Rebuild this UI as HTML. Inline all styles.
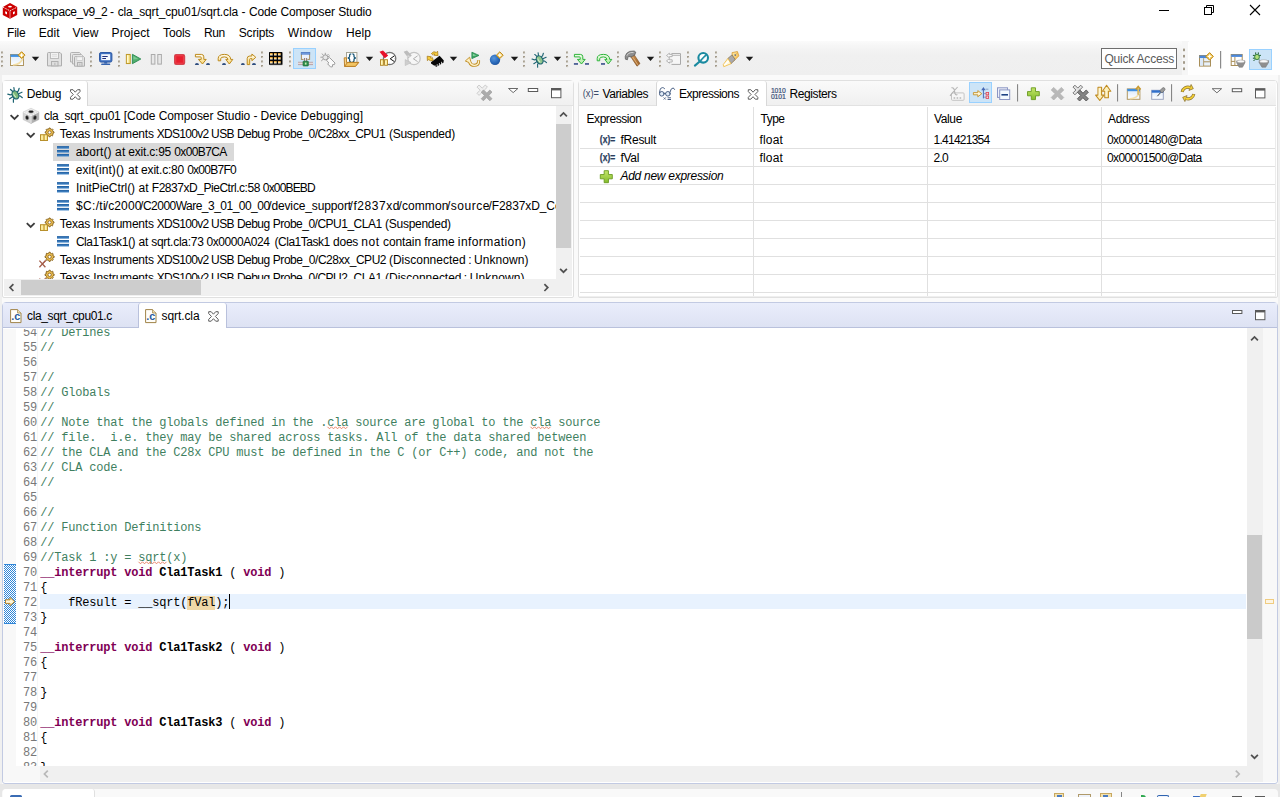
<!DOCTYPE html>
<html><head><meta charset="utf-8"><title>CCS</title>
<style>
*{box-sizing:border-box;margin:0;padding:0}
html,body{width:1280px;height:797px;overflow:hidden;background:#f0f0f0}
body{font-family:"Liberation Sans",sans-serif;font-size:12px;color:#000;position:relative}
.abs{position:absolute}
.t{position:absolute;white-space:pre;line-height:14px;font-size:12px;color:#000}
.i{font-style:italic}
#titlebar{left:0;top:0;width:1280px;height:22px;background:#fff}
#menubar{left:0;top:22px;width:1280px;height:19px;background:#fff}
#toolbar{left:0;top:41px;width:1280px;height:34px;background:linear-gradient(#fbfbfb 0,#f6f6f6 14%,#f2f2f2 30%,#f0f0f0 45%,#efefef 100%)}
#subbar{left:0;top:75px;width:1280px;height:722px;background:#fafafa}
.panel{position:absolute;background:#fff;border:1px solid #e0e0e0;border-radius:4px 4px 2px 2px;overflow:hidden}
.mono{font-family:"Liberation Mono",monospace}
svg{position:absolute;overflow:visible}
.hl{position:absolute;background:#e0e0e0;height:1px}
.vl{position:absolute;background:#e0e0e0;width:1px}

.ln{position:absolute;left:13px;width:21px;text-align:right;font-family:"Liberation Mono",monospace;font-size:12px;line-height:15px;letter-spacing:-0.2px;color:#787878;white-space:pre}
.cl{position:absolute;left:37.2px;font-family:"Liberation Mono",monospace;font-size:12px;line-height:15px;letter-spacing:-0.2px;color:#000;white-space:pre}
.c,.cu{color:#3f7f5f}
.k{color:#7f0055;font-weight:bold}
.b{font-weight:bold}
.o{background:#f0d8a8}
</style></head><body>
<div id="titlebar" class="abs"></div>
<div id="menubar" class="abs"></div>
<div id="toolbar" class="abs"></div>
<div id="subbar" class="abs"></div>

<!-- TITLE -->
<div class="t" style="left: 22.7px; top: 5px; letter-spacing: -0.383px;">workspace_v9_2</div>
<div class="t" style="left:110.1px;top:5px">-</div>
<div class="t" style="left: 117.7px; top: 5px; letter-spacing: -0.135px;">cla_sqrt_cpu01/sqrt.cla</div>
<div class="t" style="left:241.6px;top:5px">-</div>
<div class="t" style="left: 248.9px; top: 5px; letter-spacing: -0.102px;">Code Composer Studio</div>

<!-- MENU -->
<div class="t m" style="left: 7px; top: 25.5px; letter-spacing: -0.186px;">File</div>
<div class="t m" style="left: 38.8px; top: 25.5px; letter-spacing: 0.003px;">Edit</div>
<div class="t m" style="left: 72.6px; top: 25.5px; letter-spacing: 0.001px;">View</div>
<div class="t m" style="left: 111.5px; top: 25.5px; letter-spacing: 0.134px;">Project</div>
<div class="t m" style="left: 163px; top: 25.5px; letter-spacing: -0.103px;">Tools</div>
<div class="t m" style="left: 204.1px; top: 25.5px; letter-spacing: -0.439px;">Run</div>
<div class="t m" style="left: 238.8px; top: 25.5px; letter-spacing: -0.184px;">Scripts</div>
<div class="t m" style="left: 287.8px; top: 25.5px; letter-spacing: 0.302px;">Window</div>
<div class="t m" style="left: 345.9px; top: 25.5px; letter-spacing: 0.078px;">Help</div>

<div class="abs" id="lmargin" style="left:0;top:75px;width:2px;height:709px;background:#f0f0f0"></div>
<div class="abs" id="rmargin" style="left:1278px;top:75px;width:2px;height:709px;background:#f0f0f0"></div>
<!-- PANELS -->
<div class="panel" id="pDebug" style="left:2px;top:80px;width:572px;height:218px"></div>
<div class="panel" id="pExpr" style="left:578px;top:80px;width:700px;height:218px"></div>
<div class="panel" id="pEdit" style="left:2px;top:302px;width:1276px;height:482px;border-color:#c2cae2;border-radius:4px 4px 3px 3px"></div>

<!--DEBUG-->
<div class="abs" style="left:3px;top:81px;width:570px;height:25px;background:linear-gradient(#fafafa,#f0f0f0);border-bottom:1px solid #e2e2e2"></div>
<div class="abs" id="dbgtab" style="left:3px;top:81px;width:85px;height:25px;background:#fff;border-right:1px solid #d8d8d8;border-radius:3px 3px 0 0"></div>
<div class="t" style="left: 26.8px; top: 87px; letter-spacing: -0.175px;">Debug</div>
<div class="abs" style="left:53px;top:143px;width:181px;height:18px;background:#d9d9d9"></div>
<div class="abs" id="treeclip" style="left:3px;top:107px;width:553px;height:172px;overflow:hidden">
<div class="t" style="left: 41px; top: 2px; letter-spacing: -0.364px;">cla_sqrt_cpu01</div>
<div class="t" style="left: 120.8px; top: 2px; letter-spacing: -0.081px;">[Code Composer Studio - Device</div>
<div class="t" style="left: 297.5px; top: 2px; letter-spacing: 0.131px;">Debugging]</div>
<div class="t" style="left: 56.8px; top: 20px; letter-spacing: -0.199px;">Texas Instruments</div>
<div class="t" style="left: 153.7px; top: 20px; letter-spacing: -0.697px;">XDS100v2</div>
<div class="t" style="left: 208px; top: 20px; letter-spacing: -0.531px;">USB Debug</div>
<div class="t" style="left: 269.8px; top: 20px; letter-spacing: -0.5px;">Probe_0/C28xx_CPU1</div>
<div class="t" style="left: 385.9px; top: 20px; letter-spacing: -0.238px;">(Suspended)</div>
<div class="t" style="left: 72.7px; top: 38px; letter-spacing: 0.079px;">abort()</div>
<div class="t" style="left: 112.1px; top: 38px; letter-spacing: 0.142px;">at</div>
<div class="t" style="left: 125.3px; top: 38px; letter-spacing: -0.211px;">exit.c:95</div>
<div class="t" style="left: 171.2px; top: 38px; letter-spacing: -0.597px;">0x00B7CA</div>
<div class="t" style="left: 72.7px; top: 56px; letter-spacing: 0.105px;">exit(int)()</div>
<div class="t" style="left: 124.9px; top: 56px; letter-spacing: 0.092px;">at</div>
<div class="t" style="left: 138.1px; top: 56px; letter-spacing: -0.189px;">exit.c:80</div>
<div class="t" style="left: 184.2px; top: 56px; letter-spacing: -0.75px;">0x00B7F0</div>
<div class="t" style="left: 73.1px; top: 74px; letter-spacing: -0.086px;">InitPieCtrl()</div>
<div class="t" style="left: 135.6px; top: 74px; letter-spacing: 0.092px;">at</div>
<div class="t" style="left: 148.8px; top: 74px; letter-spacing: -0.465px;">F2837xD_PieCtrl.c:58</div>
<div class="t" style="left: 259.8px; top: 74px; letter-spacing: -0.838px;">0x00BEBD</div>
<div class="t" style="left: 72.9px; top: 92px; letter-spacing: 0.364px;">$C:/ti</div>
<div class="t" style="left: 101.7px; top: 92px; letter-spacing: 0.128px;">/c2000</div>
<div class="t" style="left: 137.1px; top: 92px; letter-spacing: -0.516px;">/C2000Ware_3_01_00_00</div>
<div class="t" style="left: 265.2px; top: 92px; letter-spacing: -0.129px;">/device_support</div>
<div class="t" style="left: 346.6px; top: 92px; letter-spacing: 0.544px;">/f2837xd</div>
<div class="t" style="left: 395.6px; top: 92px; letter-spacing: 0.063px;">/common</div>
<div class="t" style="left: 444px; top: 92px; letter-spacing: 0.52px;">/source</div>
<div class="t" style="left: 485.6px; top: 92px; letter-spacing: -0.104px;">/F2837xD_Co</div>
<div class="t" style="left: 56.8px; top: 110px; letter-spacing: -0.199px;">Texas Instruments</div>
<div class="t" style="left: 153.7px; top: 110px; letter-spacing: -0.697px;">XDS100v2</div>
<div class="t" style="left: 208px; top: 110px; letter-spacing: -0.531px;">USB Debug</div>
<div class="t" style="left: 269.8px; top: 110px; letter-spacing: -0.506px;">Probe_0/CPU1_CLA1</div>
<div class="t" style="left: 382.1px; top: 110px; letter-spacing: -0.274px;">(Suspended)</div>
<div class="t" style="left: 72.9px; top: 128px; letter-spacing: -0.448px;">Cla1Task1()</div>
<div class="t" style="left: 135.4px; top: 128px; letter-spacing: 0.042px;">at</div>
<div class="t" style="left: 148.2px; top: 128px; letter-spacing: -0.269px;">sqrt.cla:73</div>
<div class="t" style="left: 203.5px; top: 128px; letter-spacing: -0.451px;">0x0000A024</div>
<div class="t" style="left: 271.5px; top: 128px; letter-spacing: -0.483px;">(Cla1Task1</div>
<div class="t" style="left: 330.1px; top: 128px; letter-spacing: -0.283px;">does</div>
<div class="t" style="left: 358.3px; top: 128px; letter-spacing: 0.504px;">not</div>
<div class="t" style="left: 380px; top: 128px; letter-spacing: -0.1px;">contain</div>
<div class="t" style="left: 421.3px; top: 128px; letter-spacing: -0.098px;">frame</div>
<div class="t" style="left: 454.8px; top: 128px; letter-spacing: 0.42px;">information)</div>
<div class="t" style="left: 56.8px; top: 146px; letter-spacing: -0.199px;">Texas Instruments</div>
<div class="t" style="left: 153.7px; top: 146px; letter-spacing: -0.697px;">XDS100v2</div>
<div class="t" style="left: 208px; top: 146px; letter-spacing: -0.531px;">USB Debug</div>
<div class="t" style="left: 269.8px; top: 146px; letter-spacing: -0.45px;">Probe_0/C28xx_CPU2</div>
<div class="t" style="left: 385.9px; top: 146px; letter-spacing: -0.001px;">(Disconnected</div>
<div class="t" style="left:465.2px;top:146px">:</div>
<div class="t" style="left: 471.1px; top: 146px; letter-spacing: 0.046px;">Unknown)</div>
<div class="t" style="left: 56.8px; top: 164px; letter-spacing: -0.199px;">Texas Instruments</div>
<div class="t" style="left: 153.7px; top: 164px; letter-spacing: -0.697px;">XDS100v2</div>
<div class="t" style="left: 208px; top: 164px; letter-spacing: -0.531px;">USB Debug</div>
<div class="t" style="left: 269.8px; top: 164px; letter-spacing: -0.506px;">Probe_0/CPU2_CLA1</div>
<div class="t" style="left: 382.1px; top: 164px; letter-spacing: -0.025px;">(Disconnected</div>
<div class="t" style="left:460.8px;top:164px">:</div>
<div class="t" style="left: 466.7px; top: 164px; letter-spacing: 0.121px;">Unknown)</div>
</div>
<div class="abs" style="left:556px;top:106px;width:16px;height:173px;background:#f0f0f0"></div>
<div class="abs" style="left:556px;top:124px;width:15px;height:124px;background:#cdcdcd"></div>
<div class="abs" style="left:4px;top:279px;width:568px;height:17px;background:#f0f0f0"></div>
<div class="abs" style="left:21px;top:280px;width:180px;height:15px;background:#cdcdcd"></div>
<!--/DEBUG-->
<!--EXPR-->
<div class="abs" style="left:579px;top:81px;width:697px;height:25px;background:linear-gradient(#fafafa,#f0f0f0);border-bottom:1px solid #e2e2e2"></div>
<div class="abs" id="exprtab" style="left:656px;top:81px;width:111px;height:25px;background:#fff;border-left:1px solid #d8d8d8;border-right:1px solid #d8d8d8;border-radius:3px 3px 0 0"></div>
<div class="t" style="left: 602.5px; top: 87px; letter-spacing: -0.405px;">Variables</div>
<div class="t" style="left: 679px; top: 87px; letter-spacing: -0.489px;">Expressions</div>
<div class="t" style="left: 789.5px; top: 87px; letter-spacing: -0.41px;">Registers</div>
<!-- grid -->
<div class="vl" style="left:753px;top:107px;height:189px"></div>
<div class="vl" style="left:927px;top:107px;height:189px"></div>
<div class="vl" style="left:1101px;top:107px;height:189px"></div>
<div class="hl" style="left:580px;top:148px;width:696px"></div>
<div class="hl" style="left:580px;top:166px;width:696px"></div>
<div class="hl" style="left:580px;top:184px;width:696px"></div>
<div class="hl" style="left:580px;top:202px;width:696px"></div>
<div class="hl" style="left:580px;top:220px;width:696px"></div>
<div class="hl" style="left:580px;top:238px;width:696px"></div>
<div class="hl" style="left:580px;top:256px;width:696px"></div>
<div class="hl" style="left:580px;top:274px;width:696px"></div>
<div class="hl" style="left:580px;top:292px;width:696px"></div>
<div class="vl" style="left:1275px;top:107px;height:189px;background:#ececec"></div>
<div class="hl" style="left:579px;top:296px;width:697px;background:#efefef"></div>
<div class="t" style="left: 586.5px; top: 112px; letter-spacing: -0.437px;">Expression</div>
<div class="t" style="left: 760.5px; top: 112px; letter-spacing: -0.504px;">Type</div>
<div class="t" style="left: 934px; top: 112px; letter-spacing: -0.362px;">Value</div>
<div class="t" style="left: 1108px; top: 112px; letter-spacing: -0.362px;">Address</div>
<div class="t" style="left: 620.5px; top: 133px; letter-spacing: -0.266px;">fResult</div>
<div class="t" style="left: 759.5px; top: 133px; letter-spacing: 0.163px;">float</div>
<div class="t" style="left: 933.5px; top: 133px; letter-spacing: -0.741px;">1.41421354</div>
<div class="t" style="left: 1107px; top: 133px; letter-spacing: -0.606px;">0x00001480@Data</div>
<div class="t" style="left: 620.5px; top: 151px; letter-spacing: -0.324px;">fVal</div>
<div class="t" style="left: 759.5px; top: 151px; letter-spacing: 0.163px;">float</div>
<div class="t" style="left: 933.5px; top: 151px; letter-spacing: -0.729px;">2.0</div>
<div class="t" style="left: 1107px; top: 151px; letter-spacing: -0.606px;">0x00001500@Data</div>
<div class="t i" style="left: 620.5px; top: 169px; letter-spacing: -0.282px;">Add new expression</div>
<!--/EXPR-->
<!--EDITOR-->
<div class="abs" style="left:3px;top:303px;width:1274px;height:25px;background:linear-gradient(#e9edfb,#dde2f3);border-bottom:1px solid #b9c1dc"></div>
<div class="abs" id="edtab" style="left:138px;top:303px;width:89px;height:25px;background:#fff;border-left:1px solid #b9c1dc;border-right:1px solid #b9c1dc;border-radius:3px 3px 0 0"></div>
<div class="t" style="left: 27px; top: 309px; letter-spacing: -0.358px;">cla_sqrt_cpu01.c</div>
<div class="t" style="left: 161.5px; top: 309px; letter-spacing: -0.086px;">sqrt.cla</div>
<div class="abs" id="edclip" style="left:3px;top:328px;width:1243px;height:438px;overflow:hidden;background:#fff;clip-path:inset(1px 0 0 0)">
<div class="abs" style="left:0;top:0;width:13px;height:438px;background:#f8f8f8"></div><div class="abs" style="left:34px;top:0;width:1px;height:438px;background:#f6f6f6"></div>
<div class="abs" style="left:37px;top:266px;width:1206px;height:15px;background:#e8f2fe"></div>
<div class="abs" id="hatch" style="left:1px;top:236px;width:12px;height:60px;background-color:#fff;background-image:linear-gradient(45deg,#2f86d8 25%,transparent 25%,transparent 75%,#2f86d8 75%),linear-gradient(45deg,#2f86d8 25%,transparent 25%,transparent 75%,#2f86d8 75%);background-size:2px 2px;background-position:0 0,1px 1px;border-top:1px solid #2f86d8;border-bottom:1px solid #2f86d8"></div>
<div class="ln" style="top:-2px">54</div>
<div class="cl" style="top:-2px"><span class="c">// Defines</span></div>
<div class="ln" style="top:13px">55</div>
<div class="cl" style="top:13px"><span class="c">//</span></div>
<div class="ln" style="top:28px">56</div>
<div class="ln" style="top:43px">57</div>
<div class="cl" style="top:43px"><span class="c">//</span></div>
<div class="ln" style="top:58px">58</div>
<div class="cl" style="top:58px"><span class="c">// Globals</span></div>
<div class="ln" style="top:73px">59</div>
<div class="cl" style="top:73px"><span class="c">//</span></div>
<div class="ln" style="top:88px">60</div>
<div class="cl" style="top:88px"><span class="c">// Note that the globals defined in the .</span><span class="cu">cla</span><span class="c"> source are global to the </span><span class="cu">cla</span><span class="c"> source</span></div>
<div class="ln" style="top:103px">61</div>
<div class="cl" style="top:103px"><span class="c">// file.  i.e. they may be shared across tasks. All of the data shared between</span></div>
<div class="ln" style="top:118px">62</div>
<div class="cl" style="top:118px"><span class="c">// the CLA and the C28x CPU must be defined in the C (or C++) code, and not the</span></div>
<div class="ln" style="top:133px">63</div>
<div class="cl" style="top:133px"><span class="c">// CLA code.</span></div>
<div class="ln" style="top:148px">64</div>
<div class="cl" style="top:148px"><span class="c">//</span></div>
<div class="ln" style="top:163px">65</div>
<div class="ln" style="top:178px">66</div>
<div class="cl" style="top:178px"><span class="c">//</span></div>
<div class="ln" style="top:193px">67</div>
<div class="cl" style="top:193px"><span class="c">// Function Definitions</span></div>
<div class="ln" style="top:208px">68</div>
<div class="cl" style="top:208px"><span class="c">//</span></div>
<div class="ln" style="top:223px">69</div>
<div class="cl" style="top:223px"><span class="c">//Task 1 :y = </span><span class="cu">sqrt</span><span class="c">(x)</span></div>
<div class="ln" style="top:238px">70</div>
<div class="cl" style="top:238px"><span class="k">__interrupt</span><span class="n"> </span><span class="k">void</span><span class="n"> </span><span class="b">Cla1Task1</span><span class="n"> ( </span><span class="k">void</span><span class="n"> )</span></div>
<div class="ln" style="top:253px">71</div>
<div class="cl" style="top:253px"><span class="n">{</span></div>
<div class="ln" style="top:268px">72</div>
<div class="cl" style="top:268px"><span class="n">    fResult = __sqrt(</span><span class="o">fVal</span><span class="n">);</span></div>
<div class="ln" style="top:283px">73</div>
<div class="cl" style="top:283px"><span class="n">}</span></div>
<div class="ln" style="top:298px">74</div>
<div class="ln" style="top:313px">75</div>
<div class="cl" style="top:313px"><span class="k">__interrupt</span><span class="n"> </span><span class="k">void</span><span class="n"> </span><span class="b">Cla1Task2</span><span class="n"> ( </span><span class="k">void</span><span class="n"> )</span></div>
<div class="ln" style="top:328px">76</div>
<div class="cl" style="top:328px"><span class="n">{</span></div>
<div class="ln" style="top:343px">77</div>
<div class="ln" style="top:358px">78</div>
<div class="cl" style="top:358px"><span class="n">}</span></div>
<div class="ln" style="top:373px">79</div>
<div class="ln" style="top:388px">80</div>
<div class="cl" style="top:388px"><span class="k">__interrupt</span><span class="n"> </span><span class="k">void</span><span class="n"> </span><span class="b">Cla1Task3</span><span class="n"> ( </span><span class="k">void</span><span class="n"> )</span></div>
<div class="ln" style="top:403px">81</div>
<div class="cl" style="top:403px"><span class="n">{</span></div>
<div class="ln" style="top:418px">82</div>
<div class="ln" style="top:433px">83</div>
<div class="cl" style="top:433px"><span class="n">}</span></div>
<div class="abs" style="left:226px;top:266px;width:1.4px;height:15px;background:#000"></div>
</div>
<div class="abs" style="left:1247px;top:328px;width:16px;height:438px;background:#f0f0f0"></div>
<div class="abs" style="left:1247px;top:535px;width:15px;height:104px;background:#cacaca"></div>
<div class="abs" style="left:1263px;top:328px;width:14px;height:454px;background:#f8f8f8"></div>
<div class="abs" style="left:1265px;top:599px;width:9px;height:5px;border:1px solid #f0cc80;background:#fdf5e4"></div>
<div class="abs" style="left:3px;top:766px;width:1260px;height:16px;background:#f0f0f0"></div>
<div class="abs" style="left:3px;top:766px;width:37px;height:16px;background:#f8f8f8"></div>
<!--/EDITOR-->
<!--TOOLBAR-->
<svg id="tbsvg" style="left:0;top:0" width="1280" height="80" viewBox="0 0 1280 80">
<defs><linearGradient id="gy" x1="0" y1="0" x2="0" y2="1"><stop offset="0" stop-color="#f8a428"></stop><stop offset="0.55" stop-color="#ffd98c"></stop><stop offset="1" stop-color="#fffaf0"></stop></linearGradient><radialGradient id="gball" cx="0.4" cy="0.35" r="0.7"><stop offset="0" stop-color="#5896dc"></stop><stop offset="0.6" stop-color="#2c6cbc"></stop><stop offset="1" stop-color="#1a509c"></stop></radialGradient><linearGradient id="gwin" x1="0" y1="0" x2="0" y2="1"><stop offset="0" stop-color="#d8e8fa"></stop><stop offset="1" stop-color="#ffffff"></stop></linearGradient><linearGradient id="gham" x1="0" y1="0" x2="1" y2="1"><stop offset="0" stop-color="#d09a5c"></stop><stop offset="1" stop-color="#9a5e24"></stop></linearGradient><linearGradient id="gstep" x1="0" y1="0" x2="0" y2="1"><stop offset="0" stop-color="#fffdf4"></stop><stop offset="1" stop-color="#f9d670"></stop></linearGradient><linearGradient id="gstepg" x1="0" y1="0" x2="0" y2="1"><stop offset="0" stop-color="#f2fdec"></stop><stop offset="1" stop-color="#a8e89a"></stop></linearGradient><linearGradient id="gpen" x1="0" y1="0" x2="1" y2="1"><stop offset="0" stop-color="#fdeeb0"></stop><stop offset="1" stop-color="#f2b040"></stop></linearGradient></defs>
<g transform="translate(1,51.5)"><rect x="0" y="0.0" width="2" height="2" fill="#a39b8b"></rect><rect x="0.6" y="1.2" width="1.6" height="1" fill="#d8d4cc"></rect><rect x="0" y="4.5" width="2" height="2" fill="#a39b8b"></rect><rect x="0.6" y="5.7" width="1.6" height="1" fill="#d8d4cc"></rect><rect x="0" y="9.0" width="2" height="2" fill="#a39b8b"></rect><rect x="0.6" y="10.2" width="1.6" height="1" fill="#d8d4cc"></rect><rect x="0" y="13.5" width="2" height="2" fill="#a39b8b"></rect><rect x="0.6" y="14.7" width="1.6" height="1" fill="#d8d4cc"></rect></g>
<g transform="translate(10,52)"><rect x="0.5" y="2.5" width="13" height="11" fill="url(#gwin)" stroke="#b09660"></rect><rect x="0.5" y="2.5" width="13" height="2.4" fill="#3f8fe0"></rect><path d="M3 13Q11 12.5 12.8 6" fill="none" stroke="#f3dfa8" stroke-width="1.6"></path><path d="M11.6 -0.3L15 3.1L11.6 6.5L8.2 3.1Z" fill="#f0c448" stroke="#c08c20" stroke-width="1"></path><path d="M11.6 1.2V5M9.7 3.1H13.5" stroke="#ffffff" stroke-width="1.2"></path></g>
<g transform="translate(31.8,56.8)"><path d="M0 0H7.4L3.7 4.3Z" fill="#1a1a1a"></path></g>
<g transform="translate(47,52)"><path d="M1.5 0.5H13L14.5 2V13.9H0.5V1.5Q0.5 0.5 1.5 0.5Z" fill="#e2e2e2" stroke="#adadad"></path><rect x="3.5" y="0.5" width="8" height="6" fill="#f2f2f2" stroke="#bcbcbc"></rect><path d="M5 2.5H10M5 4.2H10" stroke="#d8d8d8" stroke-width="0.8"></path><rect x="4.5" y="9.5" width="6.5" height="4.4" fill="#dedede" stroke="#b0b0b0"></rect><rect x="7" y="10.8" width="1.6" height="2.6" fill="#c4c4c4"></rect></g>
<g transform="translate(70,52)"><path d="M1.5 0.5H9.5L10.5 1.5V10H0.5V1.5Q0.5 0.5 1.5 0.5Z" fill="#e6e6e6" stroke="#b2b2b2"></path><path d="M3.5 2.5H11.5L12.5 3.5V12H2.5V3.5Q2.5 2.5 3.5 2.5Z" fill="#e6e6e6" stroke="#b2b2b2"></path><path d="M5.5 4.5H13.5L14.5 5.5V14.2H4.5V5.5Q4.5 4.5 5.5 4.5Z" fill="#e2e2e2" stroke="#adadad"></path><rect x="6.8" y="4.8" width="5.6" height="3.6" fill="#f4f4f4" stroke="#cacaca" stroke-width="0.8"></rect><rect x="7.5" y="10.5" width="4.5" height="3.7" fill="#dedede" stroke="#b0b0b0"></rect><rect x="9" y="11.6" width="1.4" height="2" fill="#c4c4c4"></rect></g>
<g transform="translate(90,51.5)"><rect x="0" y="0.0" width="2" height="2" fill="#a39b8b"></rect><rect x="0.6" y="1.2" width="1.6" height="1" fill="#d8d4cc"></rect><rect x="0" y="4.5" width="2" height="2" fill="#a39b8b"></rect><rect x="0.6" y="5.7" width="1.6" height="1" fill="#d8d4cc"></rect><rect x="0" y="9.0" width="2" height="2" fill="#a39b8b"></rect><rect x="0.6" y="10.2" width="1.6" height="1" fill="#d8d4cc"></rect><rect x="0" y="13.5" width="2" height="2" fill="#a39b8b"></rect><rect x="0.6" y="14.7" width="1.6" height="1" fill="#d8d4cc"></rect></g>
<g transform="translate(99,52)"><rect x="0.5" y="0.5" width="12.4" height="9.6" rx="1.6" fill="#3c6fc0" stroke="#2f5aa4"></rect><rect x="2.2" y="2.2" width="9" height="6" fill="#f4f7fd"></rect><path d="M3.3 4.5H8.7" stroke="#22307c" stroke-width="1"></path><path d="M3.3 6.5H7" stroke="#22307c" stroke-width="1"></path><rect x="5.2" y="10" width="3" height="1.6" fill="#3563ae"></rect><rect x="2.2" y="11.5" width="9" height="1.5" rx="0.6" fill="#3563ae"></rect></g>
<g transform="translate(118,51.5)"><rect x="0" y="0.0" width="2" height="2" fill="#a39b8b"></rect><rect x="0.6" y="1.2" width="1.6" height="1" fill="#d8d4cc"></rect><rect x="0" y="4.5" width="2" height="2" fill="#a39b8b"></rect><rect x="0.6" y="5.7" width="1.6" height="1" fill="#d8d4cc"></rect><rect x="0" y="9.0" width="2" height="2" fill="#a39b8b"></rect><rect x="0.6" y="10.2" width="1.6" height="1" fill="#d8d4cc"></rect><rect x="0" y="13.5" width="2" height="2" fill="#a39b8b"></rect><rect x="0.6" y="14.7" width="1.6" height="1" fill="#d8d4cc"></rect></g>
<g transform="translate(125.8,54)"><rect x="0.6" y="0.5" width="3.8" height="9" fill="#fdeea0" stroke="#c09a2c" stroke-width="1.1"></rect><path d="M1.6 1.2V8.8" stroke="#fffbe0" stroke-width="0.9"></path><path d="M6.6 0.3L15 5L6.6 9.7Z" fill="#4fae6c" stroke="#2c8a54" stroke-width="0.9" stroke-linejoin="round"></path><path d="M7.6 2L12.5 5L7.6 5.4Z" fill="#86cf9a" opacity="0.8"></path></g>
<g transform="translate(150.8,54)"><rect x="0.5" y="0.5" width="3.6" height="9.6" fill="#e8e8e8" stroke="#ababab"></rect><rect x="7" y="0.5" width="3.6" height="9.6" fill="#e8e8e8" stroke="#ababab"></rect></g>
<g transform="translate(174,54)"><rect x="0.6" y="0.6" width="10" height="9.8" rx="1.6" fill="#e81f2e" stroke="#d3464f" stroke-width="1.2"></rect><rect x="1.8" y="1.8" width="7.6" height="7.4" rx="0.6" fill="none" stroke="#f0505a" stroke-width="0.7"></rect></g>
<g transform="translate(194.8,54)"><path d="M0.6 0.4H6.6Q9 0.4 9 2.8V5.4H11.4L7.7 10L3.6 5.4H6.4V3.6Q6.4 2.9 5.6 2.9H0.6Z" fill="url(#gstep)" stroke="#bd8a1c" stroke-width="1" stroke-linejoin="round"></path><path d="M0.1 10.9Q0.1 8.9 2.15 8.9Q4.2 8.9 4.2 10.9Z" fill="#2c4c7e"></path><path d="M11.2 10.9Q11.2 8.9 13.2 8.9Q15.2 8.9 15.2 10.9Z" fill="#2c4c7e"></path></g>
<g transform="translate(217.8,54)"><path d="M0.4 6.8V4.5Q0.4 0.4 6.6 0.4Q12.6 0.4 12.9 5.4H15L11.5 10L8 5.4H10.2Q10 2.9 6.6 2.9Q2.9 2.9 2.9 4.8V6.8Z" fill="url(#gstep)" stroke="#bd8a1c" stroke-width="1" stroke-linejoin="round"></path><path d="M4.2 10.9Q4.2 8.9 6.199999999999999 8.9Q8.2 8.9 8.2 10.9Z" fill="#2c4c7e"></path></g>
<g transform="translate(240.8,54)"><path d="M6.4 10.6V4.6Q6.4 2 9 2H11.1V0L15 3.3L11.1 6.7V4.6H9.6Q8.9 4.6 8.9 5.4V10.6Z" fill="url(#gstep)" stroke="#bd8a1c" stroke-width="1" stroke-linejoin="round"></path><path d="M0.1 10.9Q0.1 8.9 2.05 8.9Q4 8.9 4 10.9Z" fill="#2c4c7e"></path><path d="M11.1 10.9Q11.1 8.9 13.149999999999999 8.9Q15.2 8.9 15.2 10.9Z" fill="#2c4c7e"></path></g>
<g transform="translate(261,51.5)"><rect x="0" y="0.0" width="2" height="2" fill="#a39b8b"></rect><rect x="0.6" y="1.2" width="1.6" height="1" fill="#d8d4cc"></rect><rect x="0" y="4.5" width="2" height="2" fill="#a39b8b"></rect><rect x="0.6" y="5.7" width="1.6" height="1" fill="#d8d4cc"></rect><rect x="0" y="9.0" width="2" height="2" fill="#a39b8b"></rect><rect x="0.6" y="10.2" width="1.6" height="1" fill="#d8d4cc"></rect><rect x="0" y="13.5" width="2" height="2" fill="#a39b8b"></rect><rect x="0.6" y="14.7" width="1.6" height="1" fill="#d8d4cc"></rect></g>
<g transform="translate(269,52.1)"><rect x="0.3" y="0.4" width="13.6" height="12.9" rx="0.8" fill="#000" opacity="0.18"></rect><rect x="0" y="0" width="13.4" height="12.7" rx="0.6" fill="#050505"></rect><rect x="1.0" y="1.0" width="2.7" height="2.4" fill="url(#gy)"></rect><rect x="5.0" y="1.0" width="2.7" height="2.4" fill="url(#gy)"></rect><rect x="9.0" y="1.0" width="2.7" height="2.4" fill="url(#gy)"></rect><rect x="1.0" y="5.0" width="2.7" height="2.4" fill="url(#gy)"></rect><rect x="5.0" y="5.0" width="2.7" height="2.4" fill="url(#gy)"></rect><rect x="9.0" y="5.0" width="2.7" height="2.4" fill="url(#gy)"></rect><rect x="1.0" y="9.0" width="2.7" height="2.4" fill="url(#gy)"></rect><rect x="5.0" y="9.0" width="2.7" height="2.4" fill="url(#gy)"></rect><rect x="9.0" y="9.0" width="2.7" height="2.4" fill="url(#gy)"></rect></g>
<g transform="translate(289,51.5)"><rect x="0" y="0.0" width="2" height="2" fill="#a39b8b"></rect><rect x="0.6" y="1.2" width="1.6" height="1" fill="#d8d4cc"></rect><rect x="0" y="4.5" width="2" height="2" fill="#a39b8b"></rect><rect x="0.6" y="5.7" width="1.6" height="1" fill="#d8d4cc"></rect><rect x="0" y="9.0" width="2" height="2" fill="#a39b8b"></rect><rect x="0.6" y="10.2" width="1.6" height="1" fill="#d8d4cc"></rect><rect x="0" y="13.5" width="2" height="2" fill="#a39b8b"></rect><rect x="0.6" y="14.7" width="1.6" height="1" fill="#d8d4cc"></rect></g>
<rect x="293.5" y="48.5" width="22" height="20" fill="#cce4f7" stroke="#99d1ff"></rect>
<g transform="translate(298,52)"><path d="M0 10.3H15M0 12.6H15" stroke="#b69696" stroke-width="0.9"></path><path d="M0 11.45H15" stroke="#e8dcdc" stroke-width="1.2"></path><rect x="3.4" y="0.6" width="8.2" height="6.8" fill="#eaf1fc" stroke="#a89060"></rect><rect x="2.9" y="0.1" width="9.2" height="2.5" fill="#4a7acc"></rect><path d="M3.4 1.3H11.6" stroke="#8ab0e8" stroke-width="0.7"></path><rect x="5.6" y="6.6" width="3.8" height="1.6" fill="#eaf1fc"></rect><path d="M6.6 6V9.6M8.6 6V9.6" stroke="#8a6a5a" stroke-width="0.9"></path><rect x="5.1" y="9.3" width="5.2" height="4.6" rx="0.4" fill="#2f9050" stroke="#1e703a" stroke-width="0.8"></rect><rect x="6.9" y="10.6" width="1.6" height="2" fill="#c8ecb0"></rect></g>
<g transform="translate(320,52.4)"><g fill="none" stroke="#a2a2a2" stroke-width="1"><path d="M5.3 0.4V2.6M2 1.2L3.6 3.2M8.6 1.6L7 3.2M0.4 4.8H2.8M1.2 8.6L3.2 6.8M9.8 3.4L7.8 4.4"></path><circle cx="5.3" cy="5" r="2.5" fill="#e8e8e8"></circle><path d="M7.4 6.6L9.6 5.2L15 10.6L14.4 12.2L12.6 12.2L12.4 14.4L10.6 14.6L7.6 11.4L8.8 10.6L8 9.4L6.6 8.2Z" fill="#fafafa" stroke="#9e9e9e" stroke-linejoin="round"></path></g></g>
<g transform="translate(343.8,52.2)"><rect x="2.7" y="0.3" width="10.4" height="10.6" fill="#fff" stroke="#a4a494"></rect><path d="M7.5 1.6Q5.8 1.6 5.8 3V4.4Q5.8 5.8 3.9 5.8Q5.8 5.8 5.8 7.2V8.6Q5.8 10 7.5 10M8.5 1.6Q10.2 1.6 10.2 3V4.4Q10.2 5.8 12.1 5.8Q10.2 5.8 10.2 7.2V8.6Q10.2 10 8.5 10" fill="none" stroke="#1a5878" stroke-width="1.3" stroke-linejoin="miter"></path><path d="M0.4 5.6H2.7V10.2H14.9L11.6 14.2H0.8Z" fill="#f6d488" stroke="#b87c24" stroke-width="0.9" stroke-linejoin="round"></path><path d="M3.8 10.2H14.9L11.6 14.2H0.8Z" fill="#f2c462" stroke="#b87c24" stroke-width="0.9" stroke-linejoin="round"></path></g>
<g transform="translate(365.8,56.8)"><path d="M0 0H7.4L3.7 4.3Z" fill="#1a1a1a"></path></g>
<g transform="translate(0,0)"><circle cx="389.6" cy="58.5" r="6.2" fill="#fff" stroke="#747474" stroke-width="1.3"></circle><path d="M394.4 55.8L390.2 58.8L394.4 61.6" fill="none" stroke="#111" stroke-width="1"></path><path d="M389.6 53.4V54.2M389.6 62.8V63.6M394 58.5H394.8" stroke="#b0b0b0" stroke-width="0.7"></path><path d="M383 57.6L384.4 54.4L387.4 56.6Z" fill="#8c8c8c"></path><path d="M379.5 51.8L383 50.6L388.2 55.6L384.8 58.2Z" fill="#e8102a"></path><rect x="380.5" y="59.7" width="2.9" height="5.6" fill="#fbe88c" stroke="#b08424" stroke-width="0.9"></rect><rect x="384.6" y="59.7" width="2.9" height="5.6" fill="#fbe88c" stroke="#b08424" stroke-width="0.9"></rect><path d="M381.7 60.6V64.6M385.8 60.6V64.6" stroke="#fffbe0" stroke-width="0.8"></path></g>
<g transform="translate(0,0)"><circle cx="414" cy="58.5" r="6.2" fill="#f6f6f6" stroke="#c4c4c4" stroke-width="1.3"></circle><path d="M417.6 55.8L413.4 58.8L417.6 61.6" fill="none" stroke="#b0b0b0" stroke-width="1"></path><path d="M403.6 51.8L407 50.6L411.8 55.6L408.4 58.2Z" fill="#bcbcbc"></path><path d="M406.6 57.6L408 54.8L410.6 56.8Z" fill="#d4d4d4"></path><path d="M405.2 59.6L411 62.6L405.2 65.6Z" fill="#cecece" stroke="#bcbcbc" stroke-width="0.6"></path></g>
<g transform="translate(0,0)"><path d="M431 62.2L439.6 55.8L443.6 60.2V62.4L436.2 67L431 63.6Z" fill="#080808"></path><path d="M435 65.2V67M437.2 64.2V66.6M439.4 63V65.2M441.6 61.8V64" stroke="#fff" stroke-width="0.8"></path><path d="M431.4 53.6Q433.6 50.6 436.4 52.4L437.6 51.2L438 55.6L433.8 55.2L434.8 54.2Q433.6 53.4 432.8 54.8Z" fill="#f6cc3c" stroke="#a87c1c" stroke-width="0.8" stroke-linejoin="round"></path><path d="M433.2 60.2Q430.6 61.8 428.6 59.6L427.4 60.6L427.2 56.2L431.4 56.8L430.4 57.8Q431.4 58.6 432.4 57.6Z" fill="#f6cc3c" stroke="#a87c1c" stroke-width="0.8" stroke-linejoin="round"></path></g>
<g transform="translate(449.8,56.8)"><path d="M0 0H7.4L3.7 4.3Z" fill="#1a1a1a"></path></g>
<g transform="translate(0,0)"><path d="M478.5 60.2V62.2Q478.3 65.3 474.2 65.3Q470.8 65.3 469.8 62.4" fill="none" stroke="#bf8c20" stroke-width="3.1" stroke-linecap="butt"></path><path d="M465.3 61L469.6 57.2L471.4 63.6Z" fill="#fff0c0" stroke="#bf8c20" stroke-width="0.9" stroke-linejoin="round"></path><path d="M478.5 60.6V62.2Q478.3 65.3 474.2 65.3Q470.8 65.3 469.6 61.8" fill="none" stroke="#fff3cc" stroke-width="1.3"></path><path d="M471.9 52.2L479 55.4L471.9 58.6Z" fill="#3aa664" stroke="#24884c" stroke-width="0.8" stroke-linejoin="round"></path><path d="M472.8 53.8L476.4 55.4L472.8 56Z" fill="#8cd4a0"></path></g>
<g transform="translate(489.8,52)"><circle cx="5.2" cy="7.8" r="5.2" fill="url(#gball)"></circle><path d="M10 -0.2L13.4 3.2L10 6.6L6.6 3.2Z" fill="#f0c448" stroke="#c08c20" stroke-width="1"></path><path d="M10 1.3V5.1M8.1 3.2H11.9" stroke="#ffffff" stroke-width="1.2"></path></g>
<g transform="translate(510.8,56.8)"><path d="M0 0H7.4L3.7 4.3Z" fill="#1a1a1a"></path></g>
<g transform="translate(523,51.5)"><rect x="0" y="0.0" width="2" height="2" fill="#a39b8b"></rect><rect x="0.6" y="1.2" width="1.6" height="1" fill="#d8d4cc"></rect><rect x="0" y="4.5" width="2" height="2" fill="#a39b8b"></rect><rect x="0.6" y="5.7" width="1.6" height="1" fill="#d8d4cc"></rect><rect x="0" y="9.0" width="2" height="2" fill="#a39b8b"></rect><rect x="0.6" y="10.2" width="1.6" height="1" fill="#d8d4cc"></rect><rect x="0" y="13.5" width="2" height="2" fill="#a39b8b"></rect><rect x="0.6" y="14.7" width="1.6" height="1" fill="#d8d4cc"></rect></g>
<g transform="translate(532,52)"><g transform="rotate(-28 7.6 7.8)"><g fill="none" stroke="#1d6472" stroke-width="1.1" stroke-linecap="round"><path d="M5.8 0.8L6.8 3.6M9.6 0.8L8.6 3.6M1.2 3.6L3 5.4L4.8 6M14 3.8L12.2 5.6L10.6 6.2M0.6 8.6L4.4 8.2M14.6 8.6L11 8.4M2.4 13.4L3.6 11L5.2 10.2M12.4 13.6L11.4 11.2L10 10.4"></path></g><ellipse cx="7.6" cy="7.9" rx="3.1" ry="4.3" fill="#8fc48c" stroke="#1d6472" stroke-width="1.2"></ellipse><path d="M6.6 5.6Q5.8 8 7 10.4" fill="none" stroke="#d8f0d0" stroke-width="0.9"></path></g></g>
<g transform="translate(553.8,56.8)"><path d="M0 0H7.4L3.7 4.3Z" fill="#1a1a1a"></path></g>
<g transform="translate(566,51.5)"><rect x="0" y="0.0" width="2" height="2" fill="#a39b8b"></rect><rect x="0.6" y="1.2" width="1.6" height="1" fill="#d8d4cc"></rect><rect x="0" y="4.5" width="2" height="2" fill="#a39b8b"></rect><rect x="0.6" y="5.7" width="1.6" height="1" fill="#d8d4cc"></rect><rect x="0" y="9.0" width="2" height="2" fill="#a39b8b"></rect><rect x="0.6" y="10.2" width="1.6" height="1" fill="#d8d4cc"></rect><rect x="0" y="13.5" width="2" height="2" fill="#a39b8b"></rect><rect x="0.6" y="14.7" width="1.6" height="1" fill="#d8d4cc"></rect></g>
<g transform="translate(573.8,54)"><path d="M0.6 0.4H6.6Q9 0.4 9 2.8V5.4H11.4L7.7 10L3.6 5.4H6.4V3.6Q6.4 2.9 5.6 2.9H0.6Z" fill="url(#gstepg)" stroke="#2fb53c" stroke-width="1" stroke-linejoin="round"></path><rect x="0.1" y="9.2" width="4.1" height="1.5" fill="#2c4484"></rect><rect x="11.2" y="9.2" width="4.0" height="1.5" fill="#2c4484"></rect></g>
<g transform="translate(596.8,54)"><path d="M0.4 6.8V4.5Q0.4 0.4 6.6 0.4Q12.6 0.4 12.9 5.4H15L11.5 10L8 5.4H10.2Q10 2.9 6.6 2.9Q2.9 2.9 2.9 4.8V6.8Z" fill="url(#gstepg)" stroke="#2fb53c" stroke-width="1" stroke-linejoin="round"></path><rect x="4.2" y="9.2" width="4.0" height="1.5" fill="#2c4484"></rect></g>
<g transform="translate(617,51.5)"><rect x="0" y="0.0" width="2" height="2" fill="#a39b8b"></rect><rect x="0.6" y="1.2" width="1.6" height="1" fill="#d8d4cc"></rect><rect x="0" y="4.5" width="2" height="2" fill="#a39b8b"></rect><rect x="0.6" y="5.7" width="1.6" height="1" fill="#d8d4cc"></rect><rect x="0" y="9.0" width="2" height="2" fill="#a39b8b"></rect><rect x="0.6" y="10.2" width="1.6" height="1" fill="#d8d4cc"></rect><rect x="0" y="13.5" width="2" height="2" fill="#a39b8b"></rect><rect x="0.6" y="14.7" width="1.6" height="1" fill="#d8d4cc"></rect></g>
<g transform="translate(624.8,50.8)"><path d="M5.6 5.4L9 3.4L15.2 12.8L12.2 15.4Z" fill="url(#gham)" stroke="#7a4a1c" stroke-width="0.6"></path><path d="M7.4 5.4L13 14" stroke="#e0b078" stroke-width="1"></path><path d="M0.6 8.4L0.4 5.8Q1 2 4.8 0.6L9.4 0.2L11 1.4L9.8 4.4L6.2 6.2L4 5.6L3.2 6.4L2.6 9Z" fill="#8e8e8e" stroke="#565656" stroke-width="0.7" stroke-linejoin="round"></path><path d="M2 5Q3 2.2 6 1.8L8.8 1.6" fill="none" stroke="#d0d0d0" stroke-width="1"></path></g>
<g transform="translate(646.8,56.8)"><path d="M0 0H7.4L3.7 4.3Z" fill="#1a1a1a"></path></g>
<g transform="translate(659,51.5)"><rect x="0" y="0.0" width="2" height="2" fill="#a39b8b"></rect><rect x="0.6" y="1.2" width="1.6" height="1" fill="#d8d4cc"></rect><rect x="0" y="4.5" width="2" height="2" fill="#a39b8b"></rect><rect x="0.6" y="5.7" width="1.6" height="1" fill="#d8d4cc"></rect><rect x="0" y="9.0" width="2" height="2" fill="#a39b8b"></rect><rect x="0.6" y="10.2" width="1.6" height="1" fill="#d8d4cc"></rect><rect x="0" y="13.5" width="2" height="2" fill="#a39b8b"></rect><rect x="0.6" y="14.7" width="1.6" height="1" fill="#d8d4cc"></rect></g>
<g transform="translate(666,53)"><path d="M5.5 0.6H14.5V11.4H5.5" fill="#f6f6f6" stroke="#a8a8a8"></path><path d="M5.5 2.4H14.5" stroke="#bcbcbc"></path><path d="M6.2 1.4H3.4V0.2L0.5 2.5L3.4 4.8V3.6H6.2ZM6.2 6.8H3.4V5.6L0.5 7.9L3.4 10.2V9H6.2Z" fill="#f8f8f8" stroke="#a4a4a4" stroke-width="0.8" stroke-linejoin="round"></path></g>
<g transform="translate(687,51.5)"><rect x="0" y="0.0" width="2" height="2" fill="#a39b8b"></rect><rect x="0.6" y="1.2" width="1.6" height="1" fill="#d8d4cc"></rect><rect x="0" y="4.5" width="2" height="2" fill="#a39b8b"></rect><rect x="0.6" y="5.7" width="1.6" height="1" fill="#d8d4cc"></rect><rect x="0" y="9.0" width="2" height="2" fill="#a39b8b"></rect><rect x="0.6" y="10.2" width="1.6" height="1" fill="#d8d4cc"></rect><rect x="0" y="13.5" width="2" height="2" fill="#a39b8b"></rect><rect x="0.6" y="14.7" width="1.6" height="1" fill="#d8d4cc"></rect></g>
<g transform="translate(694,52)"><circle cx="9.2" cy="5.8" r="4.8" fill="#fff" stroke="#1a8aa0" stroke-width="2.1"></circle><path d="M5.4 9.8L0.9 13.6" stroke="#1a8aa0" stroke-width="2.1" stroke-linecap="round"></path><path d="M12.4 2.6L6.4 8.8" stroke="#1a8aa0" stroke-width="1.8"></path><path d="M11.6 4.6L8.4 7.8" stroke="#d8f0f4" stroke-width="0.5"></path></g>
<g transform="translate(715,51.5)"><rect x="0" y="0.0" width="2" height="2" fill="#a39b8b"></rect><rect x="0.6" y="1.2" width="1.6" height="1" fill="#d8d4cc"></rect><rect x="0" y="4.5" width="2" height="2" fill="#a39b8b"></rect><rect x="0.6" y="5.7" width="1.6" height="1" fill="#d8d4cc"></rect><rect x="0" y="9.0" width="2" height="2" fill="#a39b8b"></rect><rect x="0.6" y="10.2" width="1.6" height="1" fill="#d8d4cc"></rect><rect x="0" y="13.5" width="2" height="2" fill="#a39b8b"></rect><rect x="0.6" y="14.7" width="1.6" height="1" fill="#d8d4cc"></rect></g>
<g transform="translate(722.8,51.5)"><path d="M9.2 1.2L14.6 0L16 4.4L10.6 9.8Z" fill="url(#gpen)" stroke="#d89a30" stroke-width="0.8" stroke-linejoin="round"></path><circle cx="12.4" cy="3.6" r="0.8" fill="#2a5aa8"></circle><path d="M12.4 3.6L15 1" stroke="#d89a30" stroke-width="0.5"></path><path d="M5 7L9.2 3.4L12.4 8L8.2 12.2Z" fill="#a9a9ad" stroke="#8a7a5a" stroke-width="0.8"></path><path d="M5 7L8.2 12.2L1 15.2L0.4 13.2Z" fill="#fff7d8" stroke="#f0c050" stroke-width="0.9" stroke-linejoin="round"></path><path d="M1.6 13.6L6 9.4" stroke="#fff" stroke-width="1.4"></path></g>
<g transform="translate(745.8,56.8)"><path d="M0 0H7.4L3.7 4.3Z" fill="#1a1a1a"></path></g>
<g transform="translate(0,0)"><path d="M10 3L17.2 7V15L10 18.8L2.8 15V7Z" fill="#cc0000"></path><path d="M3 7.2L10 10.8L17 7.2" fill="none" stroke="#f6d4d4" stroke-width="1" stroke-dasharray="1.6 1"></path><path d="M10 10.8V18.6" stroke="#e89090" stroke-width="1"></path><ellipse cx="10" cy="6.6" rx="1.9" ry="0.9" fill="#fff"></ellipse><path d="M5.2 11.2L7 12V14.4L5.2 13.6Z" fill="#fff"></path><path d="M14.8 11.2L13 12V14.4L14.8 13.6Z" fill="#fff"></path></g>
<path d="M1159 10.5H1169" stroke="#000" stroke-width="1"></path>
<path d="M1206.5 7V5.5H1213.5V12.5H1212" fill="none" stroke="#000" stroke-width="1"></path><rect x="1204.5" y="7.5" width="7" height="7" fill="#fff" stroke="#000" stroke-width="1"></rect>
<path d="M1250 5L1260 15M1260 5L1250 15" stroke="#000" stroke-width="1.1"></path>
<rect x="1182" y="41" width="98" height="34" fill="#f6f6f6"></rect><rect x="1189" y="41" width="91" height="34" fill="#fefefe"></rect>
<rect x="1188" y="42" width="1" height="33" fill="#ffffff"></rect>
<rect x="1101.5" y="48.5" width="75" height="20" fill="#fff" stroke="#6e6e6e"></rect>
<g transform="translate(1183,48.6)"><rect x="0" y="0.0" width="2" height="2.6" fill="#a39b8b"></rect><rect x="0" y="6.3" width="2" height="2.6" fill="#a39b8b"></rect><rect x="0" y="12.6" width="2" height="2.6" fill="#a39b8b"></rect><rect x="0" y="18.9" width="2" height="2.6" fill="#a39b8b"></rect></g>
<g transform="translate(1199,53)"><rect x="0.5" y="2.5" width="11" height="10.6" fill="#e8f1fb" stroke="#a88e58"></rect><rect x="0.5" y="2.5" width="11" height="2.6" fill="#4a86d8"></rect><path d="M4.6 5.2V13M4.6 8.8H11.4" stroke="#a88e58"></path><rect x="1.2" y="5.4" width="3" height="7.2" fill="#dbe8f8"></rect><path d="M10.6 -0.4L14.4 3.4L10.6 7.2L6.8 3.4Z" fill="#f0c448" stroke="#c08c20" stroke-width="1"></path><path d="M10.6 1.4V5.4M8.6 3.4H12.6" stroke="#ffffff" stroke-width="1.3"></path></g>
<rect x="1220" y="51" width="1.2" height="17.5" fill="#8a8a8a"></rect>
<g transform="translate(1230.7,54)"><rect x="0.5" y="0.5" width="11" height="11" fill="#fff" stroke="#a88e58"></rect><rect x="0.5" y="0.5" width="11" height="2.4" fill="#4a86d8"></rect><path d="M4.2 3V11.5M0.5 7.4H4.2" stroke="#a88e58"></path><path d="M6 6.8H14.2V8.8L11.8 13.2H8.4L6 8.8Z" fill="#8e8e8e" stroke="#7a7a7a" stroke-width="0.6"></path><ellipse cx="10.1" cy="7.4" rx="3.7" ry="1.4" fill="#fafafa" stroke="#9a9a9a" stroke-width="0.5"></ellipse></g>
<rect x="1249.5" y="49.5" width="22" height="20" fill="#cce4f7" stroke="#99d1ff"></rect>
<g transform="translate(1252.5,52)"><g fill="none" stroke="#1c5a2c" stroke-width="1"><path d="M3.2 0.4V2.6M5.8 0.4V2.6M0.4 3.4H2.4M0.4 6.2H2.4M6.6 3.4H8.4M1 9L2.8 7.2M6.4 7.4L7.4 8.4"></path></g><ellipse cx="4.5" cy="5" rx="2.4" ry="2.6" fill="#b4e07c" stroke="#2c7a3a" stroke-width="0.9"></ellipse><path d="M6.6 8.6H16V10.6L13.2 15.2H9.4L6.6 10.6Z" fill="#8e8e8e" stroke="#7a7a7a" stroke-width="0.6"></path><ellipse cx="11.3" cy="9.2" rx="4.2" ry="1.5" fill="#fafafa" stroke="#9a9a9a" stroke-width="0.5"></ellipse></g>
</svg>
<!--/TOOLBAR-->
<div class="t" style="left: 1104.5px; top: 51.5px; color: rgb(90, 90, 90); letter-spacing: -0.211px;">Quick Access</div>
<!--ICONS-->
<svg id="icsvg" style="left:0;top:0" width="1280" height="797" viewBox="0 0 1280 797">
<defs><linearGradient id="gbar" x1="0" y1="0" x2="0" y2="1"><stop offset="0" stop-color="#1e5c9e"></stop><stop offset="1" stop-color="#4a8ccc"></stop></linearGradient><linearGradient id="gplus" x1="0" y1="0" x2="0" y2="1"><stop offset="0" stop-color="#c4e66a"></stop><stop offset="1" stop-color="#84bc2c"></stop></linearGradient><linearGradient id="gcube" x1="0" y1="0" x2="1" y2="1"><stop offset="0" stop-color="#fafafa"></stop><stop offset="1" stop-color="#b4b4b4"></stop></linearGradient><linearGradient id="gwin2" x1="0" y1="0" x2="0" y2="1"><stop offset="0" stop-color="#d8e8fa"></stop><stop offset="1" stop-color="#ffffff"></stop></linearGradient></defs>
<g transform="translate(7.8,87)"><g transform="rotate(-28 7.6 7.8)"><g fill="none" stroke="#1d6472" stroke-width="1.2" stroke-linecap="round"><path d="M5.8 0.8L6.8 3.6M9.6 0.8L8.6 3.6M1.2 3.6L3 5.4L4.8 6M14 3.8L12.2 5.6L10.6 6.2M0.6 8.6L4.4 8.2M14.6 8.6L11 8.4M2.4 13.4L3.6 11L5.2 10.2M12.4 13.6L11.4 11.2L10 10.4"></path></g><ellipse cx="7.6" cy="7.9" rx="3.1" ry="4.3" fill="#7db97a" stroke="#1d6472" stroke-width="1.2"></ellipse><path d="M6.6 5.6Q5.8 8 7 10.4" fill="none" stroke="#d8f0d0" stroke-width="0.9"></path></g></g>
<g transform="translate(70,89.2)"><path d="M0.5 0.5H3L5.25 3L7.5 0.5H10V2.4L7.2 5.25L10 8.1V10H7.5L5.25 7.5L3 10H0.5V8.1L3.3 5.25L0.5 2.4Z" fill="#fff" stroke="#5e5e5e" stroke-width="1" stroke-linejoin="miter"></path></g>
<g transform="translate(508,88)"><path d="M0.5 0.5H9.9L5.2 4.6Z" fill="#fff" stroke="#6a6a6a" stroke-width="1" stroke-linejoin="round"></path></g>
<g transform="translate(527.8,88)"><rect x="0.5" y="0.5" width="9.4" height="3" fill="#fff" stroke="#5a5a5a" stroke-width="1"></rect></g>
<g transform="translate(551,88)"><rect x="0.5" y="0.5" width="9.4" height="9.2" fill="#fff" stroke="#5a5a5a" stroke-width="1"></rect><rect x="0.5" y="0.5" width="9.4" height="1.9" fill="#5a5a5a"></rect></g>
<g transform="translate(10,114.4)"><path d="M0.6 0.7L4.5 4.6L8.4 0.7" fill="none" stroke="#3c3c3c" stroke-width="1.8"></path></g>
<g transform="translate(23,108)"><path d="M8 0.2L15.8 4L8 7.6L0.2 4Z" fill="#ececec" stroke="#c2c2c2" stroke-width="0.5"></path><path d="M0.2 4L8 7.6V15.4L0.2 11.6Z" fill="#d4d4d4" stroke="#b8b8b8" stroke-width="0.5"></path><path d="M15.8 4L8 7.6V15.4L15.8 11.6Z" fill="#b2b2b2" stroke="#a0a0a0" stroke-width="0.5"></path><path d="M0.4 4.1L8 7.7L15.6 4.1M8 7.7V15.2" fill="none" stroke="#fafafa" stroke-width="0.9"></path><ellipse cx="8" cy="3.7" rx="2.5" ry="1.3" fill="#1c1c1c" stroke="#8a8a8a" stroke-width="0.6"></ellipse><ellipse cx="4.1" cy="9.7" rx="1.6" ry="2.1" transform="rotate(-20 4.1 9.7)" fill="#1c1c1c" stroke="#909090" stroke-width="0.6"></ellipse><ellipse cx="11.9" cy="9.7" rx="1.6" ry="2.1" transform="rotate(20 11.9 9.7)" fill="#222" stroke="#7a7a7a" stroke-width="0.6"></ellipse></g>
<g transform="translate(26.2,132.4)"><path d="M0.6 0.7L4.5 4.6L8.4 0.7" fill="none" stroke="#3c3c3c" stroke-width="1.8"></path></g>
<path d="M53.96 131.83L53.96 132.97L52.91 133.29L52.57 134.11L53.09 135.08L52.28 135.89L51.31 135.37L50.49 135.71L50.17 136.76L49.03 136.76L48.71 135.71L47.89 135.37L46.92 135.89L46.11 135.08L46.63 134.11L46.29 133.29L45.24 132.97L45.24 131.83L46.29 131.51L46.63 130.69L46.11 129.72L46.92 128.91L47.89 129.43L48.71 129.09L49.03 128.04L50.17 128.04L50.49 129.09L51.31 129.43L52.28 128.91L53.09 129.72L52.57 130.69L52.91 131.51Z" fill="#efc050" stroke="#8c6822" stroke-width="1" stroke-linejoin="round"></path><circle cx="49.6" cy="132.4" r="1.58" fill="#fff" stroke="#8c6822" stroke-width="0.9"></circle>
<g transform="translate(40,128)"><rect x="0.5" y="6.7" width="7" height="5.8" fill="#f8e080" stroke="#b8902c"></rect><path d="M4 6.7V12.5" stroke="#b8902c" stroke-width="1"></path><path d="M2 7.6V11.8M5.6 7.6V11.8" stroke="#fff6c0" stroke-width="0.9"></path></g>
<g transform="translate(57,146.1)"><rect x="0" y="0.0" width="12" height="2.6" fill="url(#gbar)"></rect><rect x="0" y="3.9" width="12" height="2.6" fill="url(#gbar)"></rect><rect x="0" y="7.8" width="12" height="2.6" fill="url(#gbar)"></rect></g>
<g transform="translate(57,164.1)"><rect x="0" y="0.0" width="12" height="2.6" fill="url(#gbar)"></rect><rect x="0" y="3.9" width="12" height="2.6" fill="url(#gbar)"></rect><rect x="0" y="7.8" width="12" height="2.6" fill="url(#gbar)"></rect></g>
<g transform="translate(57,182.1)"><rect x="0" y="0.0" width="12" height="2.6" fill="url(#gbar)"></rect><rect x="0" y="3.9" width="12" height="2.6" fill="url(#gbar)"></rect><rect x="0" y="7.8" width="12" height="2.6" fill="url(#gbar)"></rect></g>
<g transform="translate(57,200.1)"><rect x="0" y="0.0" width="12" height="2.6" fill="url(#gbar)"></rect><rect x="0" y="3.9" width="12" height="2.6" fill="url(#gbar)"></rect><rect x="0" y="7.8" width="12" height="2.6" fill="url(#gbar)"></rect></g>
<g transform="translate(26.2,222.4)"><path d="M0.6 0.7L4.5 4.6L8.4 0.7" fill="none" stroke="#3c3c3c" stroke-width="1.8"></path></g>
<path d="M53.96 221.83L53.96 222.97L52.91 223.29L52.57 224.11L53.09 225.08L52.28 225.89L51.31 225.37L50.49 225.71L50.17 226.76L49.03 226.76L48.71 225.71L47.89 225.37L46.92 225.89L46.11 225.08L46.63 224.11L46.29 223.29L45.24 222.97L45.24 221.83L46.29 221.51L46.63 220.69L46.11 219.72L46.92 218.91L47.89 219.43L48.71 219.09L49.03 218.04L50.17 218.04L50.49 219.09L51.31 219.43L52.28 218.91L53.09 219.72L52.57 220.69L52.91 221.51Z" fill="#efc050" stroke="#8c6822" stroke-width="1" stroke-linejoin="round"></path><circle cx="49.6" cy="222.4" r="1.58" fill="#fff" stroke="#8c6822" stroke-width="0.9"></circle>
<g transform="translate(40,218)"><rect x="0.5" y="6.7" width="7" height="5.8" fill="#f8e080" stroke="#b8902c"></rect><path d="M4 6.7V12.5" stroke="#b8902c" stroke-width="1"></path><path d="M2 7.6V11.8M5.6 7.6V11.8" stroke="#fff6c0" stroke-width="0.9"></path></g>
<g transform="translate(57,236.1)"><rect x="0" y="0.0" width="12" height="2.6" fill="url(#gbar)"></rect><rect x="0" y="3.9" width="12" height="2.6" fill="url(#gbar)"></rect><rect x="0" y="7.8" width="12" height="2.6" fill="url(#gbar)"></rect></g>
<path d="M54.16 256.20L54.16 257.40L53.06 257.73L52.71 258.59L53.25 259.60L52.40 260.45L51.39 259.91L50.53 260.26L50.20 261.36L49.00 261.36L48.67 260.26L47.81 259.91L46.80 260.45L45.95 259.60L46.49 258.59L46.14 257.73L45.04 257.40L45.04 256.20L46.14 255.87L46.49 255.01L45.95 254.00L46.80 253.15L47.81 253.69L48.67 253.34L49.00 252.24L50.20 252.24L50.53 253.34L51.39 253.69L52.40 253.15L53.25 254.00L52.71 255.01L53.06 255.87Z" fill="#efc050" stroke="#8c6822" stroke-width="1" stroke-linejoin="round"></path><circle cx="49.6" cy="256.8" r="1.66" fill="#fff" stroke="#8c6822" stroke-width="0.9"></circle>
<g transform="translate(39,252)"><path d="M0.4 8.6L6.4 15.2M6.4 8.6L0.4 15.2" stroke="#a45c48" stroke-width="1.3"></path><path d="M3.4 11.9L7 8.4" stroke="#a45c48" stroke-width="1.1"></path></g>
<clipPath id="clr10"><rect x="30" y="269" width="40" height="10"></rect></clipPath><g clip-path="url(#clr10)">
<path d="M54.16 274.20L54.16 275.40L53.06 275.73L52.71 276.59L53.25 277.60L52.40 278.45L51.39 277.91L50.53 278.26L50.20 279.36L49.00 279.36L48.67 278.26L47.81 277.91L46.80 278.45L45.95 277.60L46.49 276.59L46.14 275.73L45.04 275.40L45.04 274.20L46.14 273.87L46.49 273.01L45.95 272.00L46.80 271.15L47.81 271.69L48.67 271.34L49.00 270.24L50.20 270.24L50.53 271.34L51.39 271.69L52.40 271.15L53.25 272.00L52.71 273.01L53.06 273.87Z" fill="#efc050" stroke="#8c6822" stroke-width="1" stroke-linejoin="round"></path><circle cx="49.6" cy="274.8" r="1.66" fill="#fff" stroke="#8c6822" stroke-width="0.9"></circle>
<g transform="translate(39,270)"><path d="M0.4 8.6L6.4 15.2M6.4 8.6L0.4 15.2" stroke="#a45c48" stroke-width="1.3"></path><path d="M3.4 11.9L7 8.4" stroke="#a45c48" stroke-width="1.1"></path></g>
</g>
<g transform="translate(559.5,111.5)"><path d="M0.6 4.8L4 1.4L7.4 4.8" fill="none" stroke="#505050" stroke-width="1.7"></path></g>
<g transform="translate(559.5,268)"><path d="M0.6 0.8L4 4.2L7.4 0.8" fill="none" stroke="#505050" stroke-width="1.7"></path></g>
<g transform="translate(8.6,283.6)"><path d="M4.8 0.6L1.4 4L4.8 7.4" fill="none" stroke="#505050" stroke-width="1.7"></path></g>
<g transform="translate(543.6,283.6)"><path d="M0.8 0.6L4.2 4L0.8 7.4" fill="none" stroke="#505050" stroke-width="1.7"></path></g>
<g transform="translate(1250.5,335.5)"><path d="M0.6 4.8L4 1.4L7.4 4.8" fill="none" stroke="#505050" stroke-width="1.7"></path></g>
<g transform="translate(1250.5,754)"><path d="M0.6 0.8L4 4.2L7.4 0.8" fill="none" stroke="#505050" stroke-width="1.7"></path></g>
<g transform="translate(43,770)"><path d="M4.8 0.6L1.4 4L4.8 7.4" fill="none" stroke="#b8b8b8" stroke-width="1.7"></path></g>
<g transform="translate(1235,770)"><path d="M0.8 0.6L4.2 4L0.8 7.4" fill="none" stroke="#b8b8b8" stroke-width="1.7"></path></g>
<g transform="translate(1232,310)"><rect x="0.5" y="0.5" width="9.4" height="3" fill="#fff" stroke="#5a5a5a" stroke-width="1"></rect></g>
<g transform="translate(1255,310)"><rect x="0.5" y="0.5" width="9.4" height="9.2" fill="#fff" stroke="#5a5a5a" stroke-width="1"></rect><rect x="0.5" y="0.5" width="9.4" height="1.9" fill="#5a5a5a"></rect></g>
<g transform="translate(1211.7,88.2)"><path d="M0.5 0.5H9.9L5.2 4.6Z" fill="#fff" stroke="#6a6a6a" stroke-width="1" stroke-linejoin="round"></path></g>
<g transform="translate(1231.8,88.2)"><rect x="0.5" y="0.5" width="9.4" height="3" fill="#fff" stroke="#5a5a5a" stroke-width="1"></rect></g>
<g transform="translate(1255,88.2)"><rect x="0.5" y="0.5" width="9.4" height="9.2" fill="#fff" stroke="#5a5a5a" stroke-width="1"></rect><rect x="0.5" y="0.5" width="9.4" height="1.9" fill="#5a5a5a"></rect></g>
<g transform="translate(747.8,89.2)"><path d="M0.5 0.5H3L5.25 3L7.5 0.5H10V2.4L7.2 5.25L10 8.1V10H7.5L5.25 7.5L3 10H0.5V8.1L3.3 5.25L0.5 2.4Z" fill="#fff" stroke="#5e5e5e" stroke-width="1" stroke-linejoin="miter"></path></g>
<text x="582.7" y="97.2" font-family="Liberation Sans" font-size="10.5" font-weight="normal" fill="#3c4c6c" stroke="#3c4c6c" stroke-width="0" textLength="16.2" lengthAdjust="spacingAndGlyphs">(x)=</text>
<text x="599.8" y="143.2" font-family="Liberation Sans" font-size="10" font-weight="bold" fill="#2c3e5e" stroke="#2c3e5e" stroke-width="0.25" textLength="15.4" lengthAdjust="spacingAndGlyphs">(x)=</text>
<text x="599.8" y="161.2" font-family="Liberation Sans" font-size="10" font-weight="bold" fill="#2c3e5e" stroke="#2c3e5e" stroke-width="0.25" textLength="15.4" lengthAdjust="spacingAndGlyphs">(x)=</text>
<g transform="translate(659,87)"><g fill="none" stroke="#4a6084" stroke-width="1" stroke-linecap="round"><circle cx="2.8" cy="6.8" r="2.3" fill="#e2edf9"></circle><circle cx="8.9" cy="6.8" r="2.3" fill="#e2edf9"></circle><path d="M5.1 6.4Q5.85 5.7 6.6 6.4"></path><path d="M0.6 5.8Q0.7 0.8 3.4 0.6Q4.8 0.6 5.6 1.6M10.9 5.4Q11.8 1 14 1Q15.2 1.2 15.6 2.4"></path></g><path d="M4.6 10.4L6.8 12.6M6.8 10.4L4.6 12.6" stroke="#4a6084" stroke-width="0.8"></path><path d="M8.6 10.8H12M8.6 12.5H12" stroke="#4a6084" stroke-width="1"></path></g>
<text x="770.9" y="92.7" font-family="Liberation Sans" font-size="6.8" fill="#3a5078" stroke="#3a5078" stroke-width="0.2" textLength="14.8" lengthAdjust="spacing">1010</text>
<text x="770.9" y="98.6" font-family="Liberation Sans" font-size="6.8" fill="#3a5078" stroke="#3a5078" stroke-width="0.2" textLength="14.8" lengthAdjust="spacing">0101</text>
<g transform="translate(599.8,170.2)"><path d="M4.36 0.5H8.64V4.36H12.50V8.64H8.64V12.50H4.36V8.64H0.5V4.36H4.36Z" fill="url(#gplus)" stroke="#6a9a20" stroke-width="0.9" stroke-linejoin="round"></path></g>
<g transform="translate(949,86.4)"><rect x="2.5" y="6.5" width="12.6" height="7.4" rx="1" fill="#f6f6f6" stroke="#c4c4c4"></rect><path d="M4.6 11.6H6.2M7.6 11.6H9.2M10.6 11.6H12.2" stroke="#b8b8b8" stroke-width="1.4"></path><path d="M2.4 1.4Q5.2 0.6 5.6 5.2Q6 9.4 8.4 8.2M8.6 0.6Q3.6 6 1 9.4" fill="none" stroke="#b4b4b4" stroke-width="1.1"></path></g>
<rect x="969.5" y="82.5" width="22" height="20" fill="#cce4f7" stroke="#99d1ff"></rect>
<g transform="translate(973,86)"><path d="M0.4 6.6H4.8V4.6L8.8 7.7L4.8 10.8V8.8H0.4Z" fill="#fff6d4" stroke="#c4922a" stroke-width="0.9" stroke-linejoin="round"></path><path d="M10.4 12.4V3.6" stroke="#4668b4" stroke-width="1"></path><path d="M8.2 4.2L10.4 1L12.6 4.2Z" fill="#4668b4"></path><path d="M10.4 7.6H13M10.4 11.2H13M12.6 3.2H15.4" stroke="#6a84b8" stroke-width="0.7"></path><rect x="13.1" y="6.4" width="2.5" height="2.4" fill="#fbd0d0" stroke="#dc4454" stroke-width="0.8"></rect><rect x="13.1" y="10" width="2.5" height="2.4" fill="#fbd0d0" stroke="#dc4454" stroke-width="0.8"></rect></g>
<g transform="translate(997,87.3)"><rect x="0.5" y="0.5" width="10" height="9.6" fill="#eef0fa" stroke="#8c96c4"></rect><rect x="2.7" y="2.6" width="10" height="9.6" fill="#f4f9ff" stroke="#8c96c4"></rect><path d="M4.4 7.5H11" stroke="#1e4284" stroke-width="1.6"></path></g>
<rect x="1017" y="84.2" width="1.1" height="17.3" fill="#868686"></rect>
<g transform="translate(1027,87.3)"><path d="M4.29 0.5H8.51V4.29H12.30V8.51H8.51V12.30H4.29V8.51H0.5V4.29H4.29Z" fill="url(#gplus)" stroke="#6a9a20" stroke-width="0.9" stroke-linejoin="round"></path></g>
<g transform="translate(1051.2,87.4)"><path d="M2.52 0L6.30 3.78L10.08 0L12.60 2.52L8.82 6.30L12.60 10.08L10.08 12.60L6.30 8.82L2.52 12.60L0 10.08L3.78 6.30L0 2.52Z" fill="#b8b8b8" stroke="#b0b0b0" stroke-width="0.7" stroke-linejoin="round"></path></g>
<g transform="translate(1073,85.2)"><path d="M1.92 0L4.80 2.88L7.68 0L9.60 1.92L6.72 4.80L9.60 7.68L7.68 9.60L4.80 6.72L1.92 9.60L0 7.68L2.88 4.80L0 1.92Z" fill="#e4e4e4" stroke="#6a6a6a" stroke-width="0.9" stroke-linejoin="round"></path></g>
<g transform="translate(1077.4,90)"><path d="M2.20 0L5.50 3.30L8.80 0L11.00 2.20L7.70 5.50L11.00 8.80L8.80 11.00L5.50 7.70L2.20 11.00L0 8.80L3.30 5.50L0 2.20Z" fill="#858585" stroke="#585858" stroke-width="0.9" stroke-linejoin="round"></path></g>
<g transform="translate(1095,84.7)"><path d="M3 2.6H6.6V10.4H9L4.8 15.8L0.6 10.4H3Z" fill="#fdf0b8" stroke="#c08c24" stroke-width="1.1" stroke-linejoin="round"></path><path d="M9.8 13V6.6H7.4L11.6 0.6L15.8 6.6H13.4V13Z" fill="#fdf0b8" stroke="#c08c24" stroke-width="1.1" stroke-linejoin="round"></path><path d="M4.2 3.6V11.4M11 12V5.4" stroke="#fffbe6" stroke-width="0.9"></path></g>
<rect x="1117" y="84.2" width="1.1" height="17.3" fill="#868686"></rect>
<g transform="translate(1126.8,86.2)"><rect x="0.5" y="2.7" width="12.6" height="10.4" fill="url(#gwin2)" stroke="#b09660"></rect><rect x="0.5" y="2.7" width="12.6" height="2.3" fill="#3f8fe0"></rect><path d="M3 12.6Q10.6 12.2 12.4 6.6" fill="none" stroke="#f3dfa8" stroke-width="1.5"></path><path d="M11.4 8.2V1.4M9 3.2L11.4 0.4L13.8 3.2" fill="none" stroke="#c8982c" stroke-width="1.6"></path><path d="M11.4 8V1.6" stroke="#fdf0b0" stroke-width="0.6"></path></g>
<g transform="translate(1151.2,87)"><rect x="0.5" y="3.3" width="11.6" height="9" fill="url(#gwin2)" stroke="#9aa4c0"></rect><rect x="0.5" y="3.3" width="11.6" height="2.4" fill="#2f6fcc"></rect><path d="M6.2 9.2L9.4 5.6" stroke="#3a3a3a" stroke-width="1"></path><path d="M8.6 3.8L11 1.2Q12.4 0 13.4 1.2Q14.4 2.4 13.2 3.6L10.8 6Z" fill="#9a9a9a" stroke="#6a6a6a" stroke-width="0.7"></path></g>
<rect x="1171" y="84.2" width="1.1" height="17.3" fill="#868686"></rect>
<g transform="translate(1179.8,85.2)"><path d="M2.39 6.78A5.9 5.9 0 0 1 10.22 2.26" fill="none" stroke="#8c7434" stroke-width="3.1"></path><path d="M14.01 8.82A5.9 5.9 0 0 1 6.18 13.34" fill="none" stroke="#8c7434" stroke-width="3.1"></path><path d="M13.51 3.45L11.30 -0.70L9.14 5.22Z" fill="#f6d234" stroke="#8c7434" stroke-width="0.8" stroke-linejoin="round"></path><path d="M2.89 12.15L5.10 16.30L7.26 10.38Z" fill="#f6d234" stroke="#8c7434" stroke-width="0.8" stroke-linejoin="round"></path><path d="M2.48 6.37A5.9 5.9 0 0 1 10.41 2.33" fill="none" stroke="#f6d234" stroke-width="1.7"></path><path d="M13.92 9.23A5.9 5.9 0 0 1 5.99 13.27" fill="none" stroke="#f6d234" stroke-width="1.7"></path></g>
<g transform="translate(10,309)"><path d="M0.6 0.6H7.6L11 4V13.6H0.6Z" fill="#fffefa" stroke="#a08448" stroke-linejoin="round"></path><path d="M7.6 0.6V4H11" fill="#f0e4c0" stroke="#a08448" stroke-width="0.8"></path><text x="1.3" y="11.2" font-family="Liberation Sans" font-weight="bold" font-size="11.5" fill="#2a5a9c" textLength="9" lengthAdjust="spacingAndGlyphs">.c</text></g>
<g transform="translate(145,309)"><path d="M0.6 0.6H7.6L11 4V13.6H0.6Z" fill="#fffefa" stroke="#a08448" stroke-linejoin="round"></path><path d="M7.6 0.6V4H11" fill="#f0e4c0" stroke="#a08448" stroke-width="0.8"></path><text x="1.3" y="11.2" font-family="Liberation Sans" font-weight="bold" font-size="11.5" fill="#2a5a9c" textLength="9" lengthAdjust="spacingAndGlyphs">.c</text></g>
<g transform="translate(208.2,311.2)"><path d="M0.5 0.5H3L5.25 3L7.5 0.5H10V2.4L7.2 5.25L10 8.1V10H7.5L5.25 7.5L3 10H0.5V8.1L3.3 5.25L0.5 2.4Z" fill="#fff" stroke="#5e5e5e" stroke-width="1" stroke-linejoin="miter"></path></g>
<g transform="translate(5,597)"><path d="M0.5 2.8H5V0.6L9.6 4.6L5 8.6V6.4H0.5Z" fill="#fff6d8" stroke="#b8862a" stroke-width="1" stroke-linejoin="round"></path></g>
<path d="M327.5 426.8L329.5 428.8L331.5 426.8L333.5 428.8L335.5 426.8L337.5 428.8L339.5 426.8L341.5 428.8L343.5 426.8L345.5 428.8L347.5 426.8" fill="none" stroke="#e8785a" stroke-width="0.9"></path>
<path d="M530.5 426.8L532.5 428.8L534.5 426.8L536.5 428.8L538.5 426.8L540.5 428.8L542.5 426.8L544.5 428.8L546.5 426.8L548.5 428.8L550.5 426.8" fill="none" stroke="#e8785a" stroke-width="0.9"></path>
<path d="M138.5 561.8L140.5 563.8L142.5 561.8L144.5 563.8L146.5 561.8L148.5 563.8L150.5 561.8L152.5 563.8L154.5 561.8L156.5 563.8L158.5 561.8L160.5 563.8L162.5 561.8L164.5 563.8L166.5 561.8" fill="none" stroke="#e8785a" stroke-width="0.9"></path>
<g transform="translate(477,85)"><path d="M2.08 0L5.20 3.12L8.32 0L10.40 2.08L7.28 5.20L10.40 8.32L8.32 10.40L5.20 7.28L2.08 10.40L0 8.32L3.12 5.20L0 2.08Z" fill="#efefef" stroke="#c2c2c2" stroke-width="0.8" stroke-linejoin="round"></path></g>
<g transform="translate(481.2,90)"><path d="M2.16 0L5.40 3.24L8.64 0L10.80 2.16L7.56 5.40L10.80 8.64L8.64 10.80L5.40 7.56L2.16 10.80L0 8.64L3.24 5.40L0 2.16Z" fill="#ababab" stroke="#9e9e9e" stroke-width="0.7" stroke-linejoin="round"></path></g>
</svg>
<!--/ICONS-->
<!--BOTTOM-->
<div class="abs" style="left:0;top:784px;width:1280px;height:13px;background:#e7e7e7"></div>
<div class="abs" style="left:2px;top:789px;width:1276px;height:8px;background:#f9f9f9;border-radius:4px 4px 0 0"></div>
<div class="abs" style="left:3px;top:789px;width:92px;height:8px;background:#fff;border-right:1px solid #e0e0e0;border-radius:3px 3px 0 0"></div>
<div class="abs" style="left:9.5px;top:794.5px;width:12.5px;height:4px;background:#3a6cb4;border-radius:1.5px 1.5px 0 0"></div>
<div class="abs" style="left:1054px;top:793px;width:10px;height:5px;background:#f3e2b0;border:1px solid #c8a860;border-bottom:0"></div>
<div class="abs" style="left:1057px;top:795px;width:5px;height:3px;background:#4a7ac0"></div>
<div class="abs" style="left:1078px;top:794px;width:13px;height:4px;background:#eef2fa;border:1px solid #b09a6a;border-bottom:0"></div>
<div class="abs" style="left:1100px;top:793px;width:12px;height:5px;background:#f3e2b0;border:1px solid #c8a860;border-bottom:0"></div>
<div class="abs" style="left:1103px;top:795px;width:5px;height:3px;background:#4a7ac0"></div>
<div class="abs" style="left:1121px;top:791.5px;width:1px;height:6px;background:#868686"></div>
<div class="abs" style="left:1141px;top:795px;width:5px;height:3px;background:#2fa850;border-radius:0 3px 0 0"></div>
<div class="abs" style="left:1156.5px;top:794.5px;width:12px;height:4px;border:1.5px solid #2f64b0;border-bottom:0;border-radius:2px 2px 0 0;background:#eef2fa"></div>
<div class="abs" style="left:1193px;top:795.5px;width:9px;height:3px;background:#3a6cc0"></div>
<div class="abs" style="left:1200px;top:794px;width:6px;height:4px;background:#f0d070;transform:skewX(-20deg)"></div>
<div class="abs" style="left:1232px;top:795.5px;width:10px;height:2px;background:#5a5a5a"></div>
<div class="abs" style="left:1255px;top:795.5px;width:10px;height:2px;background:#5a5a5a"></div>
<!--/BOTTOM-->

</body></html>
